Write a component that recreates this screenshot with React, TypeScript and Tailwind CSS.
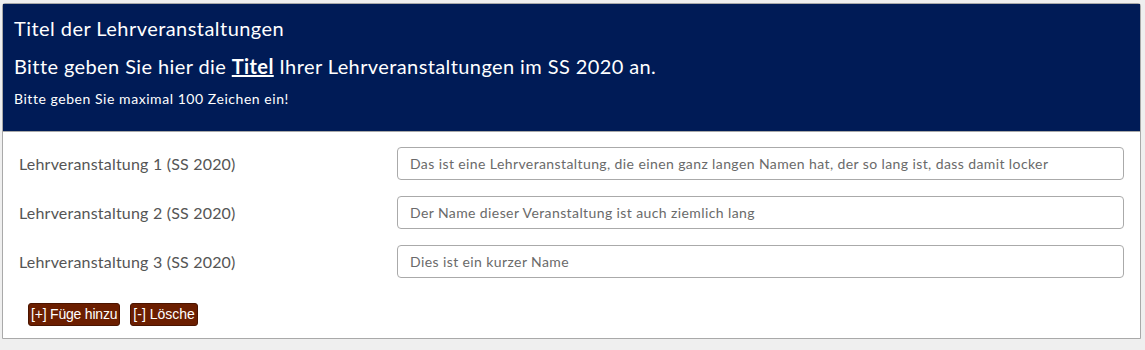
const rows = [
  { label: "Lehrveranstaltung 1 (SS 2020)", value: "Das ist eine Lehrveranstaltung, die einen ganz langen Namen hat, der so lang ist, dass damit locker" },
  { label: "Lehrveranstaltung 2 (SS 2020)", value: "Der Name dieser Veranstaltung ist auch ziemlich lang" },
  { label: "Lehrveranstaltung 3 (SS 2020)", value: "Dies ist ein kurzer Name" },
]

export default function App() {
  return (
    <div className="h-[350px] bg-[#efefef] pt-[3px] px-[2px] font-['Lato',sans-serif]">
      <div className="w-[1139px] border border-[#a9a9a9] rounded-t-[3px] bg-white">
        {/* Header */}
        <div className="h-[127px] bg-[#001b56] px-[11px] pt-[12px] text-white">
          <h1 className="text-[20px] leading-[24px] tracking-[0.45px]">Titel der Lehrveranstaltungen</h1>
          <p className="mt-[13px] text-[20px] leading-[26px] tracking-[0.4px]">
            Bitte geben Sie hier die <b className="underline">Titel</b> Ihrer Lehrveranstaltungen im SS 2020 an.
          </p>
          <p className="mt-[11px] text-[14px] leading-[18px] tracking-[0.55px]">Bitte geben Sie maximal 100 Zeichen ein!</p>
        </div>

        {/* Rows */}
        <div className="border-t border-[#a9a9a9] pt-[15px] pb-[12px]">
          {rows.map((r) => (
            <div key={r.label} className="flex items-center h-[33px] mb-[16px]">
              <label className="w-[394px] pl-[16px] text-[16px] tracking-[0.2px] text-[#555]">{r.label}</label>
              <input
                readOnly
                value={r.value}
                className="w-[727px] h-[33px] border border-[#aaa] rounded-[4px] px-[12px] text-[14px] tracking-[0.4px] text-[#6a6a6a] outline-none"
              />
            </div>
          ))}
          <div className="flex gap-[10px] pl-[25px] pt-[9px]">
            <button className="h-[23px] px-[2px] rounded-[3px] bg-[#6b1e00] border border-[#4a1400] text-white text-[14px] tracking-[-0.2px] font-['Liberation_Sans',sans-serif]">
              [+] Füge hinzu
            </button>
            <button className="h-[23px] px-[2px] rounded-[3px] bg-[#6b1e00] border border-[#4a1400] text-white text-[14px] font-['Liberation_Sans',sans-serif]">
              [-] Lösche
            </button>
          </div>
        </div>
      </div>
    </div>
  )
}
